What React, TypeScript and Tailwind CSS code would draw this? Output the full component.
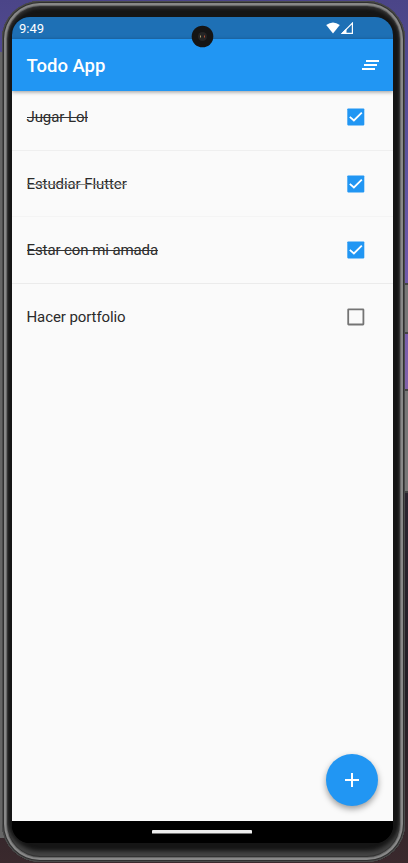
import React from "react";

type Todo = { title: string; done: boolean; row: string; strike: string };

const todos: Todo[] = [
  { title: "Jugar Lol", done: true, row: "h-[60px] pb-[8px] border-[#efefef]", strike: "bg-[#333]" },
  { title: "Estudiar Flutter", done: true, row: "h-[66px] border-[#f4f4f4]", strike: "bg-[#8a8a8a]" },
  { title: "Estar con mi amada", done: true, row: "h-[67px] border-[#ebebeb]", strike: "bg-[#333]" },
  { title: "Hacer portfolio", done: false, row: "h-[67px] border-transparent", strike: "" },
];

function Check({ done }: { done: boolean }) {
  return (
    <svg width="18" height="18" viewBox="0 0 18 18" className="shrink-0">
      {done ? (
        <>
          <rect x="0.3" y="0.4" width="17" height="17" rx="0.8" fill="#2196f3" />
          <path d="M2.8 8.8 6.9 12.5 14.8 4.7" fill="none" stroke="#fff" strokeWidth="1.8" />
        </>
      ) : (
        <rect x="1.2" y="1.3" width="15.2" height="15.2" rx="0.4" fill="none" stroke="#747474" strokeWidth="1.8" />
      )}
    </svg>
  );
}

function StatusBar() {
  return (
    <div className="flex h-[22px] items-center justify-between bg-[#1e70b5] pl-[7px] pr-[39px] text-[13px] text-white">
      <span className="pt-px leading-[22px]">9:49</span>
      <svg width="28" height="12" viewBox="0 0 28 12">
        <path d="M0.2 3.1Q7 -2.1 13.8 3.1L7 11.4Z" fill="#fff" />
        <path d="M16.2 11.3 26.4 1.1V11.3Z" fill="none" stroke="#fff" strokeWidth="1.2" />
        <path d="M15 11.8 20.5 6.3V11.8Z" fill="#fff" />
      </svg>
    </div>
  );
}

export default function App() {
  return (
    <div className="relative h-[863px] w-[408px] overflow-hidden bg-[linear-gradient(180deg,#4b4588_0%,#5d54a0_20%,#745bad_35%,#8b68a8_52%,#2b2530_57%,#221e25_80%,#3a292d_100%)] font-['Roboto',sans-serif]">
      <div className="absolute left-0 top-[52px] h-[786px] w-[6px] bg-[#656565]" />
      <div className="absolute left-[403px] top-[283px] h-[51px] w-[5px] border-y-2 border-[#444] bg-[#777]" />
      <div className="absolute left-[403px] top-[389px] h-[104px] w-[5px] border-y-2 border-[#444] bg-[#777]" />
      <div className="absolute left-[2px] top-px h-[861px] w-[403px] rounded-[38px] bg-[#151515] px-[10px] pb-[19px] pt-[16px] shadow-[inset_0_0_0_1px_#4a4a4a,inset_0_0_0_2px_#303030,inset_0_0_0_4px_#888,inset_0_0_0_5px_#686868,inset_0_0_0_6px_#333,inset_0_-7px_4px_4px_#444,inset_0_2px_3px_6px_#2c2c2c]">
        <div className="relative flex h-[826px] w-[381px] flex-col overflow-hidden rounded-[18px] bg-black">
          <StatusBar />
          <header className="z-10 flex h-[52px] shrink-0 items-center justify-between bg-[#2196f3] pl-[14.5px] pr-[14px] text-white shadow-[0_1px_4px_rgba(0,0,0,0.4)]">
            <h1 className="pt-[3px] text-[18.5px] font-medium tracking-[-0.02px]">Todo App</h1>
            <svg width="17" height="10" viewBox="0 0 17 10" fill="#fff">
              <path d="M4 0H17V2H4ZM2 4H15V6H2ZM0 8H13V10H0Z" />
            </svg>
          </header>
          <main className="flex h-[730px] shrink-0 flex-col bg-[#fafafa]">
            {todos.map((todo) => (
              <div
                key={todo.title}
                className={`flex shrink-0 items-center justify-between border-b pl-[14.5px] pr-[28px] ${todo.row}`}
              >
                <span className="relative text-[15px] leading-[20px] tracking-[-0.09px] text-[#2b2b2b]">
                  {todo.title}
                  {todo.done && <i className={`absolute left-0 top-[10px] h-px w-full ${todo.strike}`} />}
                </span>
                <Check done={todo.done} />
              </div>
            ))}
          </main>
          <div className="flex h-[22px] shrink-0 bg-black pl-[140px] pt-[9px]">
            <div className="h-[4px] w-[100px] rounded-[1px] border-b border-[#777] bg-[#eee]" />
          </div>
          <button className="absolute left-[314px] top-[737px] flex size-[52px] items-center justify-center rounded-full bg-[#2196f3] shadow-[0_3px_6px_rgba(0,0,0,0.38)]">
            <svg width="14" height="14" viewBox="0 0 14 14">
              <path d="M7 0V14M0 7H14" stroke="#fff" strokeWidth="2" />
            </svg>
          </button>
          <svg className="absolute left-[179px] top-[8px] z-20" width="23" height="23" viewBox="0 0 23 23">
            <circle cx="11.5" cy="11.5" r="10.8" fill="#151515" />
            <circle cx="11.5" cy="11.5" r="4.5" fill="#252525" />
            <path d="M9.5 10.5v2" stroke="#aaa06b" />
            <path d="M13.5 10.5v2" stroke="#b34b32" />
          </svg>
        </div>
      </div>
    </div>
  );
}
